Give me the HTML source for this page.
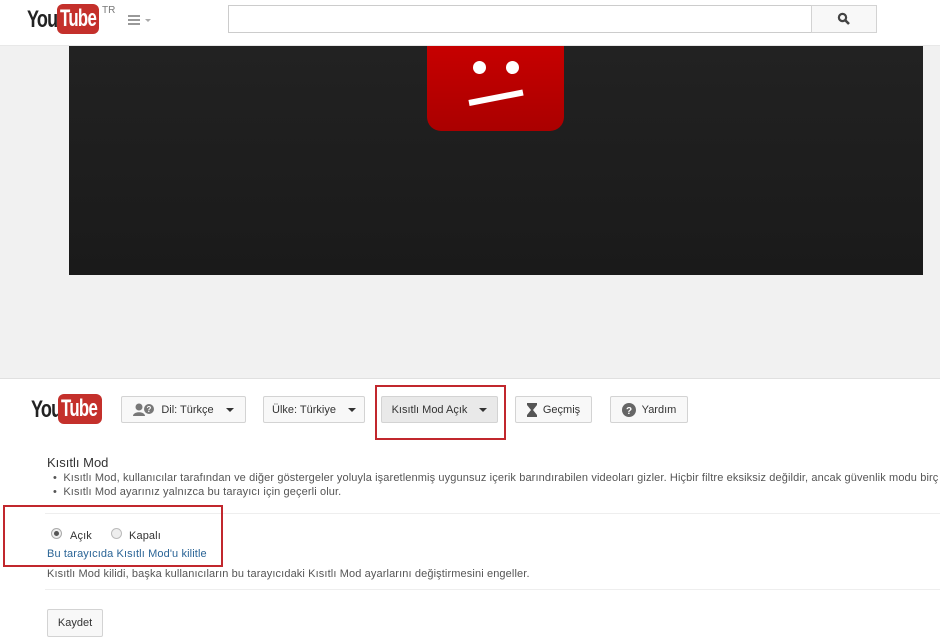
<!DOCTYPE html>
<html><head><meta charset="utf-8"><style>
*{margin:0;padding:0;box-sizing:border-box}
body{width:940px;height:639px;overflow:hidden;background:#fff;font-family:"Liberation Sans",Arial,sans-serif;position:relative;color:#333}
.abs{position:absolute}
.logo{font-family:"Liberation Sans Narrow","Liberation Sans",sans-serif;font-weight:bold;letter-spacing:-1px}
.btn{position:absolute;top:396px;height:27px;border:1px solid #d3d3d3;background:#f8f8f8;border-radius:2px;font-size:11px;color:#333;display:flex;align-items:center;justify-content:center;gap:6px}
.caret{width:0;height:0;border-left:4px solid transparent;border-right:4px solid transparent;border-top:4px solid #333;margin-left:6px}
.red{position:absolute;border:2px solid #c1272d}
.txt{font-size:11px;color:#555;letter-spacing:.12px}
</style></head><body>
<div class="abs" style="left:0;top:46px;width:940px;height:332px;background:#f1f1f1"></div>
<div class="abs" style="left:69px;top:46px;width:854px;height:229px;background:linear-gradient(#222,#1a1a1a)"></div>
<div class="abs" style="left:427px;top:30px;width:137px;height:101px;background:linear-gradient(#c00,#a00);border-radius:14px"></div>
<div class="abs" style="left:473px;top:61px;width:13px;height:13px;border-radius:50%;background:#fff"></div>
<div class="abs" style="left:506px;top:61px;width:13px;height:13px;border-radius:50%;background:#fff"></div>
<div class="abs" style="left:469px;top:100px;width:55px;height:6px;background:#fff;transform:rotate(-11deg);transform-origin:left"></div>

<div class="abs" style="left:0;top:0;width:940px;height:46px;background:#fff;border-bottom:1px solid #e8e8e8"></div>
<div class="abs logo" style="left:27px;top:6px;font-size:24px;color:#222;transform:scaleX(.75);transform-origin:left">You</div>
<div class="abs logo" style="left:57px;top:4px;width:42px;height:30px;background:#c4302b;border-radius:6px;color:#fff;font-size:24px;line-height:30px;overflow:hidden"><span style="display:inline-block;transform:scaleX(.7);transform-origin:left;margin-left:3px">Tube</span></div>
<div class="abs" style="left:102px;top:5px;font-size:10px;color:#777">TR</div>
<div class="abs" style="left:128px;top:15px;width:12px;height:2px;background:#999;box-shadow:0 4px 0 #999,0 8px 0 #999"></div>
<div class="abs" style="left:145px;top:19px;border-left:3px solid transparent;border-right:3px solid transparent;border-top:3px solid #aaa"></div>
<div class="abs" style="left:228px;top:5px;width:584px;height:28px;border:1px solid #ccc;background:#fff"></div>
<div class="abs" style="left:811px;top:5px;width:66px;height:28px;border:1px solid #d3d3d3;background:#f8f8f8"></div>
<svg class="abs" style="left:837px;top:12px" width="14" height="14" viewBox="0 0 14 14"><circle cx="5.5" cy="5.5" r="3.6" fill="none" stroke="#444" stroke-width="2.2"/><path d="M8 8l4 4" stroke="#444" stroke-width="2.6"/></svg>

<div class="abs" style="left:0;top:378px;width:940px;height:1px;background:#e0e0e0"></div>
<div class="abs logo" style="left:31px;top:396px;font-size:24px;color:#222;transform:scaleX(.75);transform-origin:left">You</div>
<div class="abs logo" style="left:58px;top:394px;width:44px;height:30px;background:#c4302b;border-radius:6px;color:#fff;font-size:24px;line-height:30px;overflow:hidden"><span style="display:inline-block;transform:scaleX(.7);transform-origin:left;margin-left:3px">Tube</span></div>

<div class="btn" style="left:121px;width:125px"><svg width="22" height="14" viewBox="0 0 22 14"><circle cx="6" cy="4" r="3.5" fill="#777"/><path d="M0 13c0-5 12-5 12 0z" fill="#777"/><circle cx="16" cy="6" r="5" fill="#777"/><text x="16" y="9" font-size="8" fill="#fff" text-anchor="middle" font-family="Liberation Sans" font-weight="bold">?</text></svg>Dil: Türkçe<span class="caret"></span></div>
<div class="btn" style="left:263px;width:102px">Ülke: Türkiye<span class="caret"></span></div>
<div class="btn" style="left:381px;width:117px;background:#e9e9e9">Kısıtlı Mod Açık<span class="caret"></span></div>
<div class="btn" style="left:515px;width:77px"><svg width="10" height="14" viewBox="0 0 10 14"><path d="M0 0h10v2L6 7l4 5v2H0v-2l4-5L0 2z" fill="#555"/></svg>Geçmiş</div>
<div class="btn" style="left:610px;width:78px"><svg width="14" height="14"><circle cx="7" cy="7" r="7" fill="#666"/><text x="7" y="11" font-size="10" fill="#fff" text-anchor="middle" font-family="Liberation Sans" font-weight="bold">?</text></svg>Yardım</div>
<div class="red" style="left:375px;top:385px;width:131px;height:55px"></div>

<div class="abs" style="left:47px;top:455px;font-size:13px;color:#333">Kısıtlı Mod</div>
<div class="abs txt" style="left:53px;top:472px;white-space:nowrap">•&nbsp; Kısıtlı Mod, kullanıcılar tarafından ve diğer göstergeler yoluyla işaretlenmiş uygunsuz içerik barındırabilen videoları gizler. Hiçbir filtre eksiksiz değildir, ancak güvenlik modu birç</div>
<div class="abs txt" style="left:53px;top:486px;white-space:nowrap">•&nbsp; Kısıtlı Mod ayarınız yalnızca bu tarayıcı için geçerli olur.</div>
<div class="abs" style="left:45px;top:513px;width:895px;height:1px;background:#eee"></div>

<div class="abs" style="left:51px;top:528px;width:11px;height:11px;border-radius:50%;border:1px solid #aaa;background:#eee"><div style="width:5px;height:5px;border-radius:50%;background:#555;margin:2px"></div></div>
<div class="abs txt" style="left:70px;top:530px;color:#333">Açık</div>
<div class="abs" style="left:111px;top:528px;width:11px;height:11px;border-radius:50%;border:1px solid #bbb;background:#eee"></div>
<div class="abs txt" style="left:129px;top:530px;color:#333">Kapalı</div>
<div class="abs" style="left:47px;top:548px;font-size:11px;color:#2a6496;letter-spacing:.12px">Bu tarayıcıda Kısıtlı Mod'u kilitle</div>
<div class="red" style="left:3px;top:505px;width:220px;height:62px"></div>
<div class="abs txt" style="left:47px;top:568px">Kısıtlı Mod kilidi, başka kullanıcıların bu tarayıcıdaki Kısıtlı Mod ayarlarını değiştirmesini engeller.</div>
<div class="abs" style="left:45px;top:589px;width:895px;height:1px;background:#eee"></div>
<div class="abs" style="left:47px;top:609px;width:56px;height:28px;border:1px solid #d3d3d3;background:#f8f8f8;border-radius:2px;font-size:11px;color:#333;text-align:center;line-height:26px">Kaydet</div>
</body></html>
